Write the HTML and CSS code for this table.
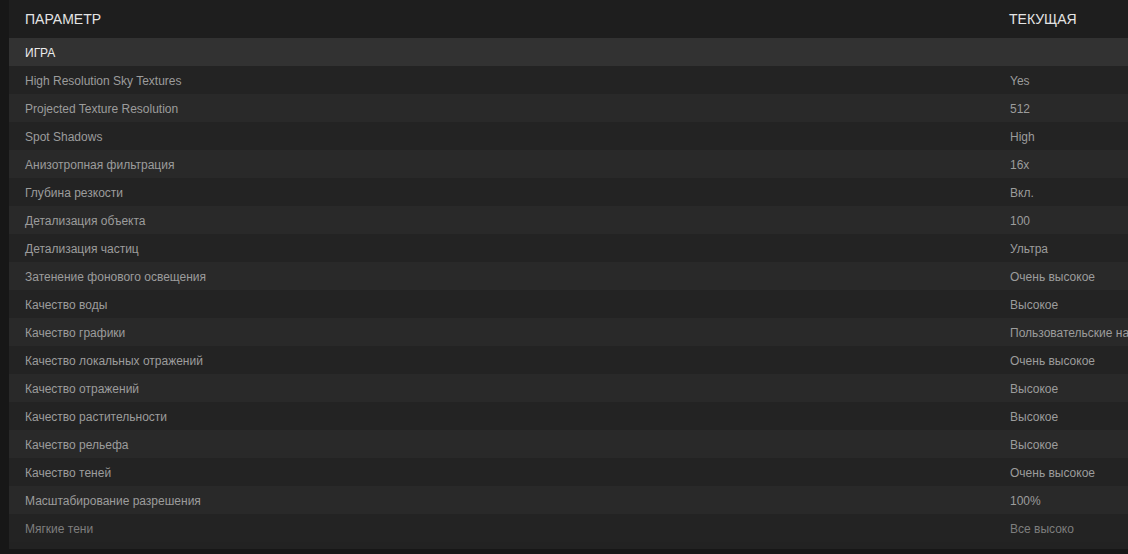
FILE: index.html
```html
<!DOCTYPE html>
<html lang="ru">
<head>
<meta charset="utf-8">
<link rel="stylesheet" href="styles.css">
</head>
<body>
<div class="page">
  <div class="table">
    <div class="head">
      <div class="c1">ПАРАМЕТР</div>
      <div class="c2">ТЕКУЩАЯ</div>
    </div>
    <div class="section">
      <div class="c1">ИГРА</div>
      <div class="c2"></div>
    </div>
    <div class="row"><div class="c1">High Resolution Sky Textures</div><div class="c2">Yes</div></div>
    <div class="row"><div class="c1">Projected Texture Resolution</div><div class="c2">512</div></div>
    <div class="row"><div class="c1">Spot Shadows</div><div class="c2">High</div></div>
    <div class="row"><div class="c1">Анизотропная фильтрация</div><div class="c2">16x</div></div>
    <div class="row"><div class="c1">Глубина резкости</div><div class="c2">Вкл.</div></div>
    <div class="row"><div class="c1">Детализация объекта</div><div class="c2">100</div></div>
    <div class="row"><div class="c1">Детализация частиц</div><div class="c2">Ультра</div></div>
    <div class="row"><div class="c1">Затенение фонового освещения</div><div class="c2">Очень высокое</div></div>
    <div class="row"><div class="c1">Качество воды</div><div class="c2">Высокое</div></div>
    <div class="row"><div class="c1">Качество графики</div><div class="c2">Пользовательские настройки</div></div>
    <div class="row"><div class="c1">Качество локальных отражений</div><div class="c2">Очень высокое</div></div>
    <div class="row"><div class="c1">Качество отражений</div><div class="c2">Высокое</div></div>
    <div class="row"><div class="c1">Качество растительности</div><div class="c2">Высокое</div></div>
    <div class="row"><div class="c1">Качество рельефа</div><div class="c2">Высокое</div></div>
    <div class="row"><div class="c1">Качество теней</div><div class="c2">Очень высокое</div></div>
    <div class="row"><div class="c1">Масштабирование разрешения</div><div class="c2">100%</div></div>
    <div class="row last"><div class="c1">Мягкие тени</div><div class="c2">Все высоко</div></div>
  </div>
</div>
</body>
</html>
```

FILE: styles.css
```css
html, body {
  margin: 0;
  padding: 0;
  background: #171717;
  width: 1128px;
  height: 554px;
  overflow: hidden;
}
.page {
  padding-left: 9px;
  font-family: "Liberation Sans", Arial, sans-serif;
}
.table {
  display: flex;
  flex-direction: column;
  width: 1200px;
  padding-bottom: 7px;
  background: #222222;
}
.head, .section, .row {
  display: grid;
  grid-template-columns: 1001px 1fr;
  align-items: center;
  white-space: nowrap;
  box-sizing: border-box;
}
.c1 { padding-left: 16px; }
.head {
  height: 38px;
  background: #1e1e1e;
  color: #e4e4e4;
  font-size: 14px;
}
.head .c2 { margin-left: -1px; }
.section {
  height: 28px;
  padding-top: 2px;
  background: #323232;
  color: #ececec;
  font-size: 12px;
}
.row {
  height: 28px;
  padding-top: 2px;
  font-size: 12px;
  color: #9c9c9c;
}
.row:nth-child(odd) { background: #232323; }
.row:nth-child(even) { background: #292929; }
.row.last { color: #7e7e7e; }
```
